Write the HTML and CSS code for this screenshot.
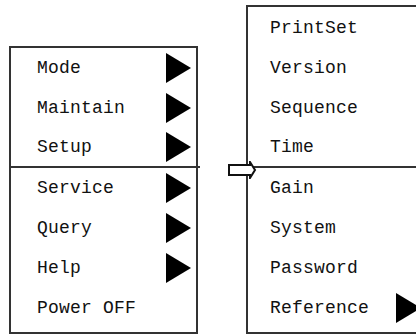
FILE: index.html
```html
<!DOCTYPE html>
<html>
<head>
<meta charset="utf-8">
<link rel="stylesheet" href="styles.css">
</head>
<body>
<div class="stage">
  <div class="menu menu-left">
    <div class="row"><span>Mode</span><i class="tri"></i></div>
    <div class="row"><span>Maintain</span><i class="tri"></i></div>
    <div class="row sep"><span>Setup</span><i class="tri"></i></div>
    <div class="row"><span>Service</span><i class="tri"></i></div>
    <div class="row"><span>Query</span><i class="tri"></i></div>
    <div class="row"><span>Help</span><i class="tri"></i></div>
    <div class="row"><span>Power OFF</span></div>
  </div>
  <div class="menu menu-right">
    <svg class="pointer" width="30" height="18" viewBox="0 0 30 18">
      <path d="M1 4 H22 V1 L27 9 L22 17 V14 H1 Z" fill="#fff" stroke="#111" stroke-width="2" stroke-linejoin="miter"/>
    </svg>
    <div class="row"><span>PrintSet</span></div>
    <div class="row"><span>Version</span></div>
    <div class="row"><span>Sequence</span></div>
    <div class="row sep"><span>Time</span></div>
    <div class="row"><span>Gain</span></div>
    <div class="row"><span>System</span></div>
    <div class="row"><span>Password</span></div>
    <div class="row"><span>Reference</span><i class="tri"></i></div>
  </div>
</div>
</body>
</html>
```
FILE: styles.css
```css
html, body {
  margin: 0;
  padding: 0;
  background: #fff;
  overflow: hidden;
}
.stage {
  display: flex;
  align-items: flex-start;
  width: 416px;
  height: 335px;
  overflow: hidden;
  font-family: "Liberation Mono", "DejaVu Sans Mono", monospace;
  font-size: 18px;
  color: #111;
}
.menu {
  border: 2px solid #333;
  flex: none;
  box-sizing: border-box;
}
.menu-left {
  margin-top: 46px;
  margin-left: 9px;
  width: 189px;
  padding: 0 5px 4px 26px;
}
.menu-right {
  position: relative;
  margin-top: 5px;
  margin-left: 48px;
  width: 182px;
  padding: 1px 5px 4px 22px;
}
.row {
  height: 40px;
  display: flex;
  align-items: center;
  justify-content: space-between;
  letter-spacing: 0.2px;
}
.row.sep {
  border-bottom: 2px solid #333;
  height: 38px;
}
.menu-left .row.sep {
  margin-left: -26px;
  padding-left: 26px;
  margin-right: -9px;
  padding-right: 9px;
}
.menu-right .row.sep {
  margin-left: -22px;
  padding-left: 22px;
  margin-right: -5px;
  padding-right: 5px;
}
.tri {
  width: 0;
  height: 0;
  border-top: 15px solid transparent;
  border-bottom: 15px solid transparent;
  border-left: 25px solid #000;
}
.pointer {
  position: absolute;
  left: -20px;
  top: 154px;
}
```
